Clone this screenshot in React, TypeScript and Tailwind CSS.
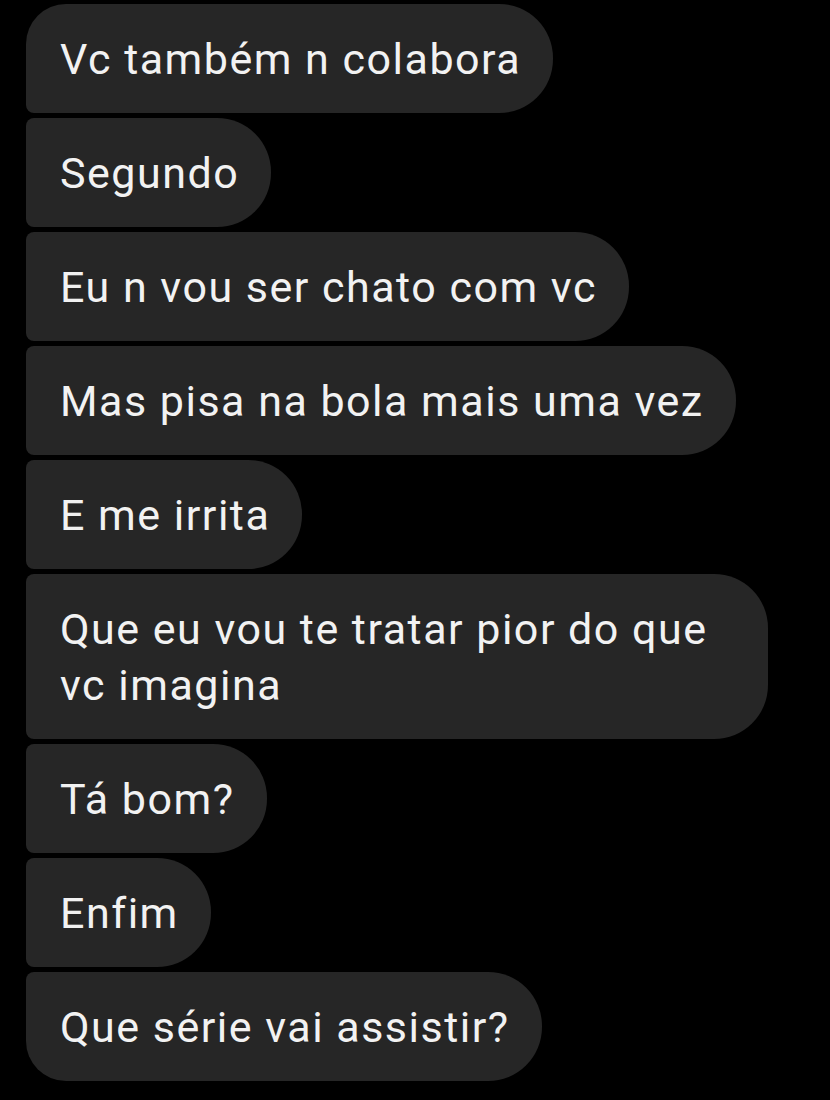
const messages = [
  "Vc também n colabora",
  "Segundo",
  "Eu n vou ser chato com vc",
  "Mas pisa na bola mais uma vez",
  "E me irrita",
  "Que eu vou te tratar pior do que vc imagina",
  "Tá bom?",
  "Enfim",
  "Que série vai assistir?",
];

const App = () => {
  return (
    <div className="min-h-[1100px] w-[830px] bg-black pt-[4px] pl-[26px] font-['Roboto',sans-serif]">
      <div className="flex flex-col items-start gap-[5px]">
        {messages.map((msg, i) => {
          const first = i === 0;
          const last = i === messages.length - 1;
          return (
            <div
              key={i}
              className={
                "max-w-[742px] bg-[#262626] pl-[34px] pr-[32px] pt-[27px] pb-[26px] text-[43px] leading-[56px] tracking-[1.5px] text-[#f2f2f2] rounded-r-[54px] " +
                (first ? "rounded-tl-[40px] rounded-bl-[8px]" : last ? "rounded-tl-[8px] rounded-bl-[40px]" : "rounded-l-[8px]")
              }
            >
              {msg}
            </div>
          );
        })}
      </div>
    </div>
  );
};

export default App;
